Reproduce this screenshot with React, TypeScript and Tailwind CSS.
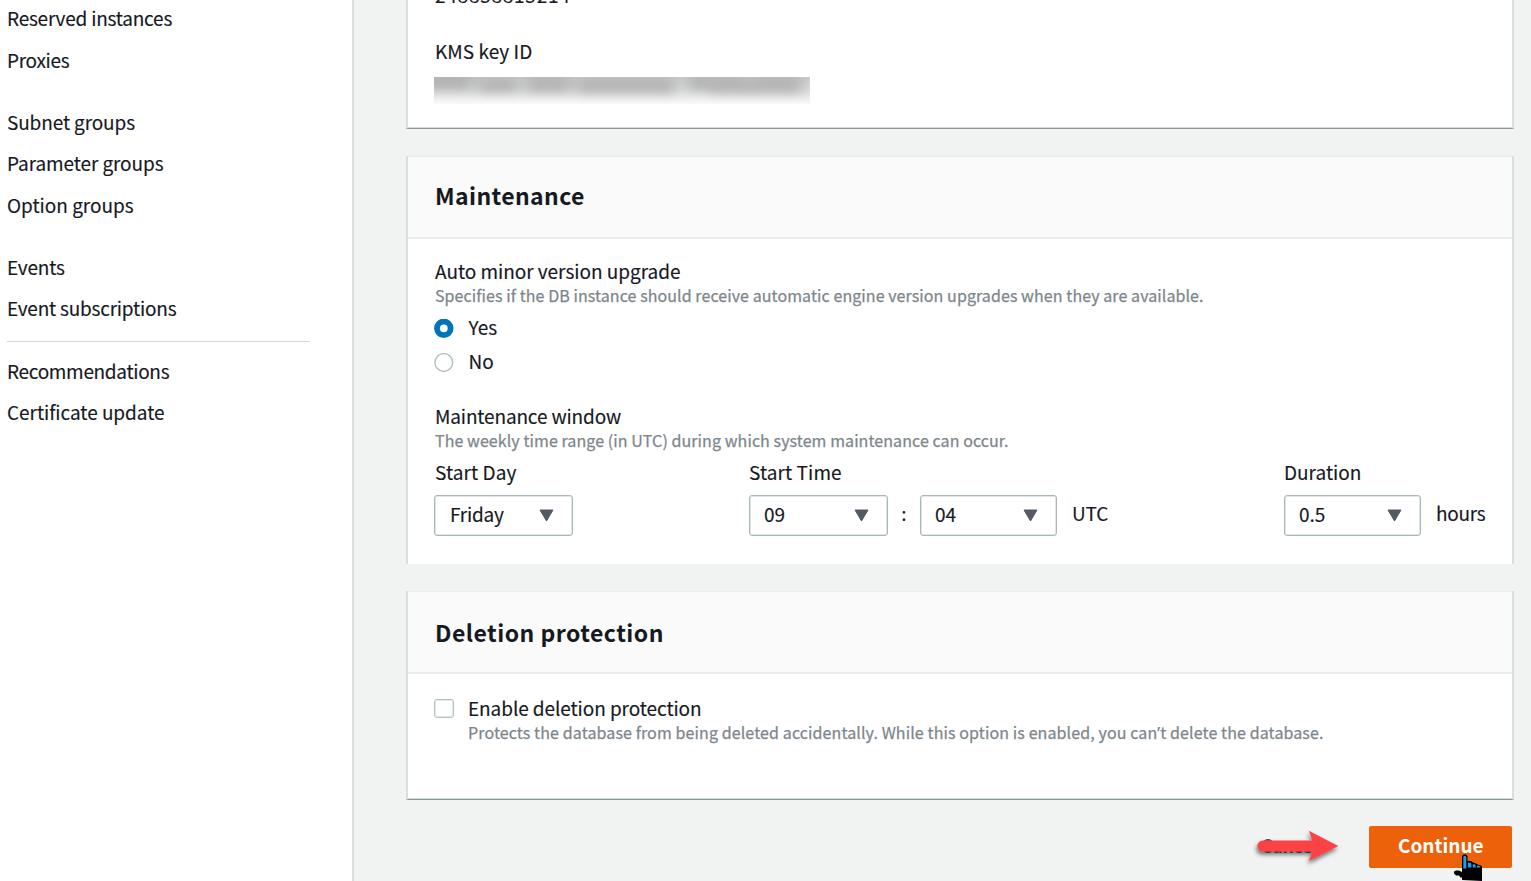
import type { ReactNode } from "react";

const LABEL = "whitespace-nowrap text-[19px] leading-[24px] [-webkit-text-stroke:0.15px]";
const HINT = "whitespace-nowrap text-[16px] leading-[24px] text-[#7d868c] [-webkit-text-stroke:0.25px]";

function NavItem({ children, className = "" }: { children: ReactNode; className?: string }) {
  return (
    <a className={`flex h-[41.7px] items-center ${LABEL} ${className}`}>
      {children}
    </a>
  );
}

function Sidebar() {
  return (
    <nav className="h-full w-[354px] shrink-0 border-r-2 border-[#d9dedf] bg-white pl-[7px]">
      <div className="-mt-[3px]">
        <NavItem className="tracking-[-0.22px]">Reserved instances</NavItem>
        <NavItem className="tracking-[-0.3px]">Proxies</NavItem>
      </div>
      <div className="mt-[20.4px]">
        <NavItem className="tracking-[-0.12px]">Subnet groups</NavItem>
        <NavItem className="tracking-[-0.09px]">Parameter groups</NavItem>
        <NavItem className="tracking-[-0.02px]">Option groups</NavItem>
      </div>
      <div className="mt-5">
        <NavItem className="tracking-[-0.18px]">Events</NavItem>
        <NavItem className="tracking-[-0.22px]">Event subscriptions</NavItem>
      </div>
      <hr className="mt-[11.6px] w-[303px] border-t border-[#d0d8d8]" />
      <div className="mt-[8px]">
        <NavItem className="tracking-[-0.32px]">Recommendations</NavItem>
        <NavItem className="tracking-[-0.04px]">Certificate update</NavItem>
      </div>
    </nav>
  );
}

function Select({ value, className }: { value: string; className: string }) {
  return (
    <div
      className={`flex h-[41px] items-center justify-between rounded-[3px] border border-[#aab7b8] bg-white pb-[4px] pl-[15px] pr-[18px] shadow-[inset_0_0_0_1px_#e0e5e5] ${LABEL} ${className}`}
    >
      <span>{value}</span>
      <svg width="15" height="13" viewBox="0 0 15 13" className="relative top-[2px]">
        <path d="M1 1h13L7.5 12z" fill="#545b64" stroke="#545b64" strokeWidth="1" strokeLinejoin="round" />
      </svg>
    </div>
  );
}

function Radio({ label, checked = false }: { label: string; checked?: boolean }) {
  return (
    <label className="flex h-[34px] items-center gap-[14px]">
      <svg width="20" height="20" viewBox="0 0 20 20" className="relative top-[2px]">
        {checked ? (
          <circle cx="9.8" cy="9.3" r="6.8" fill="#fff" stroke="#0073bb" strokeWidth="5.8" />
        ) : (
          <circle cx="9.8" cy="9.5" r="8.9" fill="#fff" stroke="#b4c0c1" strokeWidth="1.5" />
        )}
      </svg>
      <span className={`${LABEL} pl-[0.5px]`}>{label}</span>
    </label>
  );
}

function CardHeader({ title, className }: { title: string; className: string }) {
  return (
    <div className="h-[83px] border-b-2 border-t border-[#eaeded] bg-[#fafafa] pl-[27px]">
      <h2 className={`whitespace-nowrap text-[23px] font-bold leading-[28px] ${className}`}>{title}</h2>
    </div>
  );
}

function ObscuredKey() {
  return (
    <div className="h-[27px] w-[376px] overflow-hidden bg-linear-to-b from-[#cbcccd] via-[#dddedf] to-[#fafafa]">
      <svg width="377" height="28" viewBox="0 0 377 28">
        <defs>
          <filter id="soft" x="-20%" y="-80%" width="140%" height="260%">
            <feGaussianBlur stdDeviation="7 5" />
          </filter>
        </defs>
        <g fill="#a8a8a8" filter="url(#soft)" opacity="0.7">
          <rect x="-10" y="-6" width="48" height="20" />
          <rect x="44" y="0" width="40" height="16" />
          <rect x="92" y="-2" width="45" height="18" />
          <rect x="143" y="0" width="98" height="17" />
          <rect x="254" y="-2" width="60" height="16" />
          <rect x="276" y="6" width="92" height="11" />
          <rect x="318" y="-2" width="50" height="18" />
        </g>
      </svg>
    </div>
  );
}

function EncryptionCard() {
  return (
    <section className="h-[129px] overflow-hidden border-x-2 border-b border-x-[#d9dedf] border-b-[#879596] bg-white pl-[26px] shadow-[inset_0_-1px_0_#d5dbdb]">
      <div className="-mt-[17px] pl-px">
        <p className={`${LABEL} tracking-[0.75px]`}>248858815214</p>
      </div>
      <p className={`${LABEL} mt-[32px] pl-px tracking-[0.05px]`}>KMS key ID</p>
      <div className="mt-[14px]">
        <ObscuredKey />
      </div>
    </section>
  );
}

function MaintenanceCard() {
  return (
    <section className="mt-[27px] h-[408px] border-x-2 border-[#d9dedf] bg-white">
      <CardHeader title="Maintenance" className="pt-[24px] tracking-[0.4px]" />
      <div className="pl-[26px] pt-[20px]">
        <div className="pl-px">
          <p className={`${LABEL} tracking-[-0.03px]`}>Auto minor version upgrade</p>
          <p className={`${HINT} tracking-[0.08px]`}>
            Specifies if the DB instance should receive automatic engine version upgrades when they are available.
          </p>
        </div>
        <div className="mt-[3px]">
          <Radio label="Yes" checked />
          <Radio label="No" />
        </div>
        <div className="mt-[26px] pl-px">
          <p className={`${LABEL} tracking-[-0.15px]`}>Maintenance window</p>
          <p className={`${HINT} tracking-[0.08px]`}>
            The weekly time range (in UTC) during which system maintenance can occur.
          </p>
        </div>
        <div className="mt-2 flex">
          <div className="w-[315px]">
            <p className={`${LABEL} pl-px tracking-[0.1px]`}>Start Day</p>
            <Select value="Friday" className="mt-[11px] w-[139px] tracking-[-0.25px]" />
          </div>
          <div className="w-[535px]">
            <p className={`${LABEL} tracking-[0.1px]`}>Start Time</p>
            <div className="mt-[11px] flex">
              <Select value="09" className="w-[139px] -indent-px" />
              <span className={`${LABEL} w-8 pt-[6px] text-center`}>:</span>
              <Select value="04" className="w-[137px] -indent-px" />
              <span className={`${LABEL} pl-[15px] pt-[6px] tracking-[-0.1px]`}>UTC</span>
            </div>
          </div>
          <div>
            <p className={LABEL}>Duration</p>
            <div className="mt-[11px] flex">
              <Select value="0.5" className="w-[137px] -indent-px" />
              <span className={`${LABEL} pl-[15px] pt-[6px] tracking-[-0.3px]`}>hours</span>
            </div>
          </div>
        </div>
      </div>
    </section>
  );
}

function DeletionCard() {
  return (
    <section className="mt-[27px] h-[209px] border-x-2 border-b border-x-[#d9dedf] border-b-[#879596] bg-white shadow-[inset_0_-1px_0_#d5dbdb]">
      <CardHeader title="Deletion protection" className="pt-[26px] tracking-[0.48px]" />
      <div className="flex gap-[14px] pl-[26px] pt-[22px]">
        <span className="mt-[3px] h-[19px] w-5 shrink-0 rounded-[3px] border border-[#b4c0c1] bg-white shadow-[inset_0_0_0_1px_#e3e8e8]" />
        <div>
          <p className={`${LABEL} tracking-[-0.08px]`}>Enable deletion protection</p>
          <p className={`${HINT} tracking-[0.11px]`}>
            Protects the database from being deleted accidentally. While this option is enabled, you can
            <span className="font-['Noto_Sans',sans-serif]">’</span>t delete the database.
          </p>
        </div>
      </div>
    </section>
  );
}

function Arrow() {
  return (
    <svg width="100" height="50" viewBox="0 0 100 50" className="absolute -left-[3px] -top-[4px]">
      <defs>
        <filter id="drop" x="-20%" y="-30%" width="140%" height="180%">
          <feDropShadow dx="-1" dy="3" stdDeviation="2" floodColor="#000" floodOpacity="0.55" />
        </filter>
      </defs>
      <path
        d="M9.8 18.6H59.5L55.8 8.8L85.3 24L55.8 39L59.5 29.4H9.8A5.4 5.4 0 0 1 9.8 18.6Z"
        fill="#fc4245"
        filter="url(#drop)"
      />
    </svg>
  );
}

function HandCursor() {
  return (
    <svg width="30" height="28" viewBox="0 0 30 28" className="absolute left-[85px] top-[27px]">
      <path
        d="M8 27V24.5H6.5L5 22.5H2L0 20.5V18.5L2 17.5H5L8 19V3L9.5 1.5H12L13.5 3V8H17L19 9.5L22 10.5L23.5 11.5L27 12.5L28 14V27.9Z"
        fill="#000"
      />
      <path
        d="M9.3 4L10 3H11.7L12.3 4V15.6H9.3ZM14 9.8H16.6L17.4 10.8V14.6H14ZM18.7 11.2H20.8L21.6 12.2V14.6H18.7ZM23 12.8H25.5L26.3 13.6V14.6H23Z"
        fill="#1b9cf4"
      />
    </svg>
  );
}

export default function App() {
  return (
    <div className="flex h-[881px] w-[1531px] overflow-hidden bg-[#f1f3f3] font-['Noto_Sans_CJK_SC','Noto_Sans',sans-serif] text-[#16191f]">
      <Sidebar />
      <main className="ml-[52px] w-[1108px] shrink-0">
        <EncryptionCard />
        <MaintenanceCard />
        <DeletionCard />
        <div className="mt-[26px] flex justify-end pr-[2px]">
          <div className="relative h-[42px] w-[113px] pt-[7px]">
            <span className="block pl-[5px] text-[18px] font-bold leading-[24px] tracking-[-0.5px] text-[#545b64]">
              Cancel
            </span>
            <Arrow />
          </div>
          <div className="relative h-[42px] w-[143px] rounded-[2px] bg-[#ec6109] pl-[29px] pt-[7px]">
            <span className="block text-[19px] font-bold leading-[24px] text-white">Continue</span>
            <HandCursor />
          </div>
        </div>
      </main>
    </div>
  );
}
